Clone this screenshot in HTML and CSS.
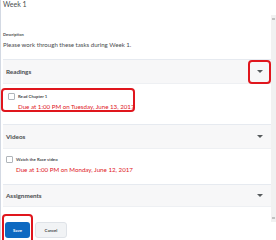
FILE: index.html
```html
<!DOCTYPE html>
<html>
<head>
<meta charset="utf-8">
<link rel="stylesheet" href="styles.css">
</head>
<body>
<div class="page">
  <div class="main">
    <div class="title">Week 1</div>
    <div class="label">Description</div>
    <div class="desc">Please work through these tasks during Week 1.</div>

    <div class="section first">
      <div class="sec-head">
        <span class="sec-title">Readings</span>
        <span class="arrow-wrap hl"><span class="arrow"></span></span>
      </div>
      <div class="item hl-item">
        <span class="check"></span>
        <div class="item-text">
          <div class="item-name">Read Chapter 1</div>
          <div class="due">Due at 1:00 PM on Tuesday, June 13, 2017</div>
        </div>
      </div>
    </div>

    <div class="section second">
      <div class="sec-head">
        <span class="sec-title">Videos</span>
        <span class="arrow-wrap"><span class="arrow"></span></span>
      </div>
      <div class="item">
        <span class="check"></span>
        <div class="item-text">
          <div class="item-name">Watch the Race video</div>
          <div class="due">Due at 1:00 PM on Monday, June 12, 2017</div>
        </div>
      </div>
    </div>

    <div class="section third">
      <div class="sec-head">
        <span class="sec-title">Assignments</span>
        <span class="arrow-wrap"><span class="arrow"></span></span>
      </div>
    </div>

    <div class="buttons">
      <span class="save-wrap"><button class="btn save">Save</button></span>
      <button class="btn cancel">Cancel</button>
    </div>
  </div>
  <div class="scroll">
    <div class="track"><span class="nub"></span><span class="nub"></span></div>
  </div>
</div>
</body>
</html>
```
FILE: styles.css
```css
* { box-sizing: border-box; }
html, body { margin: 0; padding: 0; background: #fff; }
body { font-family: Lato, "Noto Sans", sans-serif; color: #494c4e; width: 276px; height: 240px; overflow: hidden; }
.page { display: flex; height: 240px; }
.main { flex: 1; border-left: 1px solid #d3d9e3; padding-left: 2px; }
.title { font-size: 7px; line-height: 9px; }
.label { font-size: 4px; font-weight: 700; line-height: 5px; margin-top: 23px; }
.desc { font-size: 6.1px; line-height: 9px; margin-top: 3px; }
.section { border-top: 1px solid #e6eaf0; }
.section.first { margin-top: 10px; }
.sec-head { background: #f7f7f8; height: 24px; display: flex; align-items: center; justify-content: space-between; padding-left: 3px; border-bottom: 1px solid #eef0f3; }
.sec-title { font-size: 6.3px; font-weight: 700; color: #494c4e; }
.arrow-wrap { width: 23px; height: 24px; display: flex; align-items: center; justify-content: center; }
.arrow-wrap.hl { border: 2px solid #e0161d; border-radius: 4px; }
.arrow { display: block; width: 0; height: 0; border-left: 3px solid transparent; border-right: 3px solid transparent; border-top: 3px solid #565a5c; }
.item { display: flex; align-items: flex-start; gap: 3px; padding: 3px 5px; width: 134px; margin-left: -2px; height: 24px; }
.first .item { margin-top: 4px; margin-bottom: 12px; }
.second .item { margin-top: 4px; margin-bottom: 7px; }
.third .sec-head { height: 22px; }
.hl-item { border: 2px solid #e0161d; border-radius: 4px; }
.check { display: block; flex: none; width: 7px; height: 7px; border: 1px solid #b0b5ba; border-radius: 1px; background: #fff; }
.item-text { display: flex; flex-direction: column; }
.item-name { font-size: 4.3px; font-weight: 700; line-height: 6px; margin-top: 1px; }
.due { font-size: 6.2px; color: #e0161d; line-height: 9px; margin-top: 2px; white-space: nowrap; }
.buttons { display: flex; align-items: flex-start; gap: 2px; margin-top: 7px; }
.save-wrap { display: block; border: 2px solid #e0161d; border-radius: 4px; padding: 6px 1px 4px 1px; margin-left: -1px; }
.btn { font-family: Lato, sans-serif; font-size: 4.3px; font-weight: 700; border: none; border-radius: 3px; height: 16px; padding: 0; display: block; }
.save { background: #0d69c1; color: #fff; width: 25px; }
.cancel { background: #f1f3f5; color: #494c4e; width: 32px; border: 1px solid #dfe3e8; margin-top: 8px; }
.scroll { width: 5px; }
.track { margin-top: 15px; height: 207px; background: #f1f1f1; display: flex; flex-direction: column; justify-content: space-between; align-items: center; padding: 3px 0; }
.nub { display: block; width: 3px; height: 2px; background: #c1c1c1; }
```
